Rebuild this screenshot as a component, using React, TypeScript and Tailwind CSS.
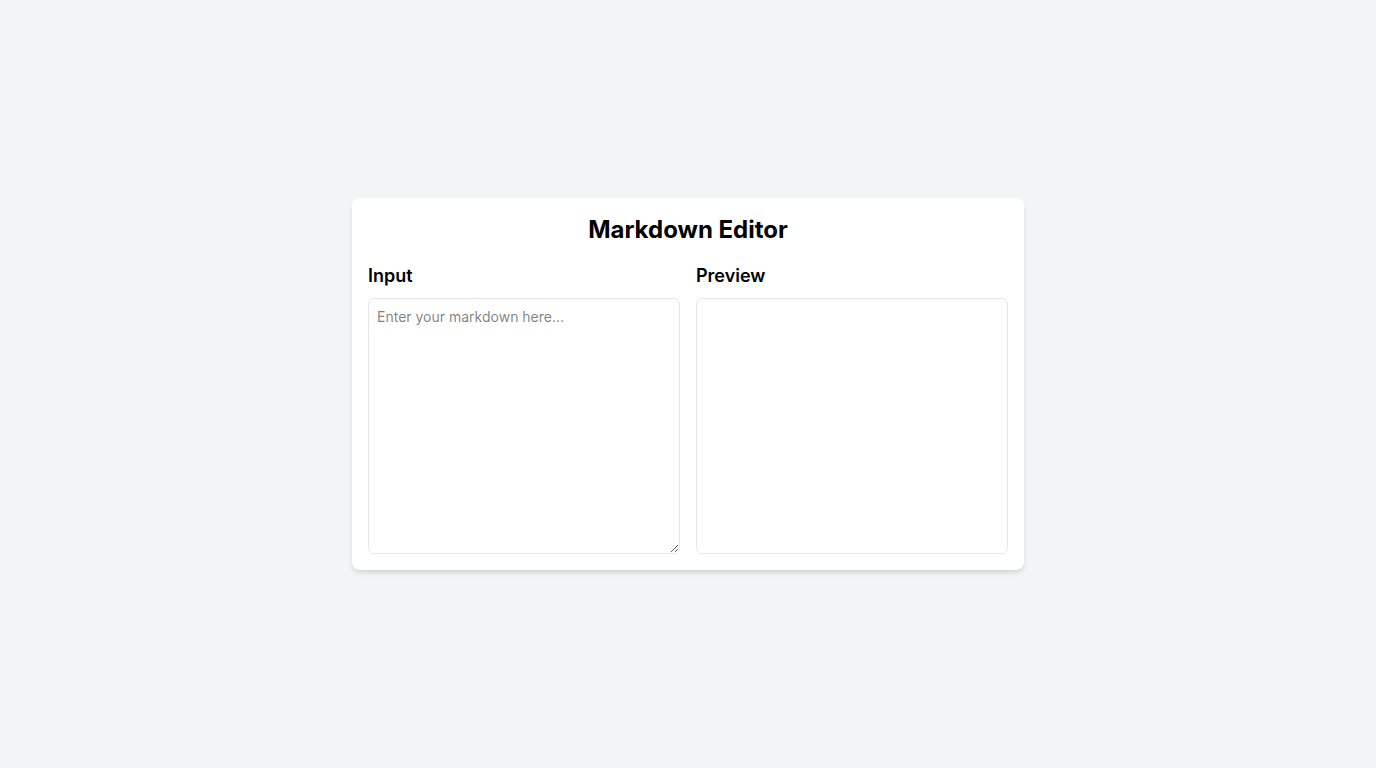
import { useState } from 'react';

export default function App() {
  const [text, setText] = useState('');

  return (
    <div className="min-h-screen flex items-center justify-center bg-gray-100 font-['Inter',sans-serif]">
      <div className="w-full max-w-2xl bg-white rounded-lg shadow-md p-4">
        <h1 className="text-2xl font-bold text-center mb-4">Markdown Editor</h1>
        <div className="grid grid-cols-2 gap-4">
          {/* Input */}
          <div>
            <h2 className="text-lg font-semibold mb-2">Input</h2>
            <textarea
              value={text}
              onChange={(e) => setText(e.target.value)}
              placeholder="Enter your markdown here..."
              className="block w-full h-64 p-2 text-sm border border-gray-200 rounded-md outline-none"
            />
          </div>
          {/* Preview */}
          <div>
            <h2 className="text-lg font-semibold mb-2">Preview</h2>
            <div className="w-full h-64 p-2 text-sm border border-gray-200 rounded-md overflow-auto">
              {text}
            </div>
          </div>
        </div>
      </div>
    </div>
  );
}
